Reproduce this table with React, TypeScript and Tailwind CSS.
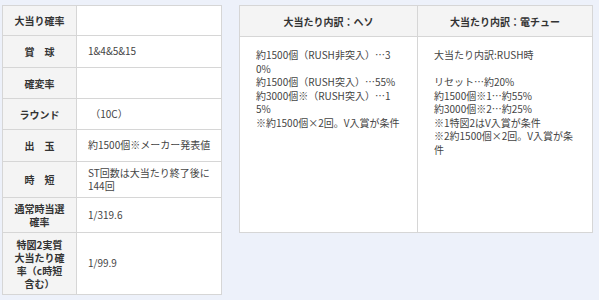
import React from "react";

const font = { fontFamily: '"Noto Sans CJK JP", "Noto Sans", sans-serif' };

type Row = { label: React.ReactNode; value: React.ReactNode; h: string };

const rows: Row[] = [
  { label: "大当り確率", value: "", h: "h-[30px]" },
  { label: "賞　球", value: "1&4&5&15", h: "h-[32px]" },
  { label: "確変率", value: "", h: "h-[31px]" },
  { label: "ラウンド", value: "\u00a0（10C）", h: "h-[31px]" },
  { label: "出　玉", value: "約1500個※メーカー発表値", h: "h-[32px]" },
  {
    label: "時　短",
    value: (
      <>
        ST回数は大当たり終了後に
        <br />
        144回
      </>
    ),
    h: "h-[36px]",
  },
  {
    label: (
      <>
        通常時当選
        <br />
        確率
      </>
    ),
    value: "1/319.6",
    h: "h-[35px]",
  },
  {
    label: (
      <>
        特図2実質
        <br />
        大当たり確
        <br />
        率（c時短
        <br />
        含む）
      </>
    ),
    value: "1/99.9",
    h: "h-[62px]",
  },
];

const hesoLines = [
  "約1500個（RUSH非突入）…3",
  "0%",
  "約1500個（RUSH突入）…55%",
  "約3000個※（RUSH突入）…1",
  "5%",
  "※約1500個×2回。V入賞が条件",
];

const denchuLines = [
  "大当たり内訳:RUSH時",
  "\u00a0",
  "リセット…約20%",
  "約1500個※1…約55%",
  "約3000個※2…約25%",
  "※1特図2はV入賞が条件",
  "※2約1500個×2回。V入賞が条",
  "件",
];

function Lines({ lines }: { lines: string[] }) {
  return (
    <div className="flex flex-col">
      {lines.map((l, i) => (
        <div key={i} className="whitespace-nowrap leading-[13.5px]">
          {l}
        </div>
      ))}
    </div>
  );
}

export default function App() {
  return (
    <div
      className="w-[599px] h-[300px] bg-[#edf1fa] text-[10px] text-[#333333] overflow-hidden"
      style={font}
    >
      <div className="flex items-start gap-[17px] pl-[2px] pt-[5px]">
        <table className="w-[220px] border-collapse bg-white table-fixed">
          <colgroup>
            <col className="w-[74px]" />
            <col />
          </colgroup>
          <tbody>
            {rows.map((r, i) => (
              <tr key={i} className={r.h}>
                <th className="border border-[#d6d6d6] bg-[#f4f4f4] px-1 py-[3px] text-center align-middle font-bold leading-[13px] whitespace-nowrap text-[#333]">
                  {r.label}
                </th>
                <td className="border border-[#d6d6d6] pl-[11px] pr-1 py-[3px] align-middle leading-[12.5px] whitespace-nowrap text-[#444]">
                  {r.value}
                </td>
              </tr>
            ))}
          </tbody>
        </table>

        <table className="w-[354px] border-collapse bg-white table-fixed">
          <colgroup>
            <col className="w-[178px]" />
            <col />
          </colgroup>
          <thead>
            <tr className="h-[31px]">
              <th className="border border-[#d6d6d6] bg-[#f4f4f4] text-center align-middle font-bold text-[#333]">
                大当たり内訳：ヘソ
              </th>
              <th className="border border-[#d6d6d6] bg-[#f4f4f4] text-center align-middle font-bold text-[#333]">
                大当たり内訳：電チュー
              </th>
            </tr>
          </thead>
          <tbody>
            <tr className="h-[196px]">
              <td className="border border-[#d6d6d6] px-4 pt-[11px] align-top text-[#444]">
                <Lines lines={hesoLines} />
              </td>
              <td className="border border-[#d6d6d6] px-4 pt-[11px] align-top text-[#444]">
                <Lines lines={denchuLines} />
              </td>
            </tr>
          </tbody>
        </table>
      </div>
    </div>
  );
}
